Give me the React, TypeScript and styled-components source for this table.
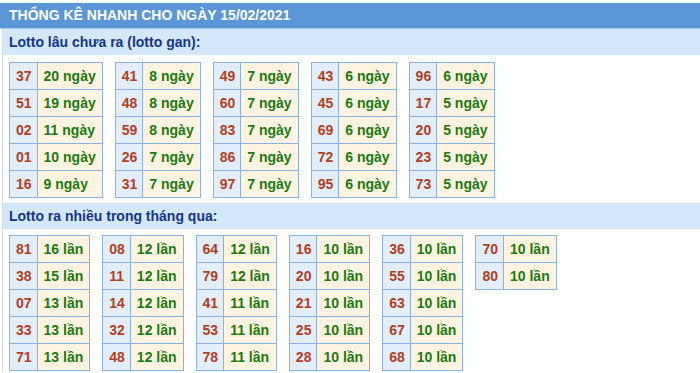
import styled, { createGlobalStyle } from "styled-components";

const GlobalStyle = createGlobalStyle`
  body {
    margin: 0;
    background: #fff;
    font-family: "Liberation Sans", Arial, sans-serif;
  }
`;

const Page = styled.div`
  padding-top: 3px;
  width: 700px;
`;

const Title = styled.div`
  height: 25px;
  background: #5b96d6;
  border-bottom: 1px solid #a9c9ee;
  color: #fff;
  font-weight: bold;
  font-size: 14px;
  line-height: 25px;
  padding-left: 9px;
`;

const Body = styled.div`
  margin-left: 2px;
  border-left: 1px solid #d3dce8;
`;

const SubTitle = styled.div`
  height: 26px;
  background: #d4e8fb;
  color: #15358c;
  font-weight: bold;
  font-size: 14px;
  line-height: 26px;
  padding-left: 6px;
`;

const Grid = styled.div<{ $top: number; $bottom: number }>`
  display: flex;
  align-items: flex-start;
  gap: 12px;
  padding: ${(p) => p.$top}px 0 ${(p) => p.$bottom}px 6px;
`;

const Table = styled.table`
  border-collapse: collapse;
  border: 1px solid #8fb0e2;
`;

const Row = styled.tr`
  height: 27px;
`;

const Num = styled.td`
  background: #e3eefd;
  border: 1px solid #8fb0e2;
  color: #b2401d;
  font-weight: bold;
  font-size: 14px;
  padding: 0 5px 0 6px;
  text-align: left;
`;

const Val = styled.td`
  background: #fef4e1;
  border: 1px solid #8fb0e2;
  color: #1b7a10;
  font-weight: bold;
  font-size: 14px;
  padding: 0 6px;
  white-space: nowrap;
`;

const gan: [string, number][][] = [
  [["37", 20], ["51", 19], ["02", 11], ["01", 10], ["16", 9]],
  [["41", 8], ["48", 8], ["59", 8], ["26", 7], ["31", 7]],
  [["49", 7], ["60", 7], ["83", 7], ["86", 7], ["97", 7]],
  [["43", 6], ["45", 6], ["69", 6], ["72", 6], ["95", 6]],
  [["96", 6], ["17", 5], ["20", 5], ["23", 5], ["73", 5]],
];

const nhieu: [string, number][][] = [
  [["81", 16], ["38", 15], ["07", 13], ["33", 13], ["71", 13]],
  [["08", 12], ["11", 12], ["14", 12], ["32", 12], ["48", 12]],
  [["64", 12], ["79", 12], ["41", 11], ["53", 11], ["78", 11]],
  [["16", 10], ["20", 10], ["21", 10], ["25", 10], ["28", 10]],
  [["36", 10], ["55", 10], ["63", 10], ["67", 10], ["68", 10]],
  [["70", 10], ["80", 10]],
];

const StatTable = ({ rows, unit }: { rows: [string, number][]; unit: string }) => (
  <Table>
    <tbody>
      {rows.map(([n, c]) => (
        <Row key={n}>
          <Num>{n}</Num>
          <Val>
            {c} {unit}
          </Val>
        </Row>
      ))}
    </tbody>
  </Table>
);

export default function App() {
  return (
    <>
      <GlobalStyle />
      <Page>
        <Title>THỐNG KÊ NHANH CHO NGÀY 15/02/2021</Title>
        <Body>
          <SubTitle>Lotto lâu chưa ra (lotto gan):</SubTitle>
          <Grid $top={7} $bottom={5}>
            {gan.map((t, i) => (
              <StatTable key={i} rows={t} unit="ngày" />
            ))}
          </Grid>
          <SubTitle>Lotto ra nhiều trong tháng qua:</SubTitle>
          <Grid $top={6} $bottom={0}>
            {nhieu.map((t, i) => (
              <StatTable key={i} rows={t} unit="lần" />
            ))}
          </Grid>
        </Body>
      </Page>
    </>
  );
}
